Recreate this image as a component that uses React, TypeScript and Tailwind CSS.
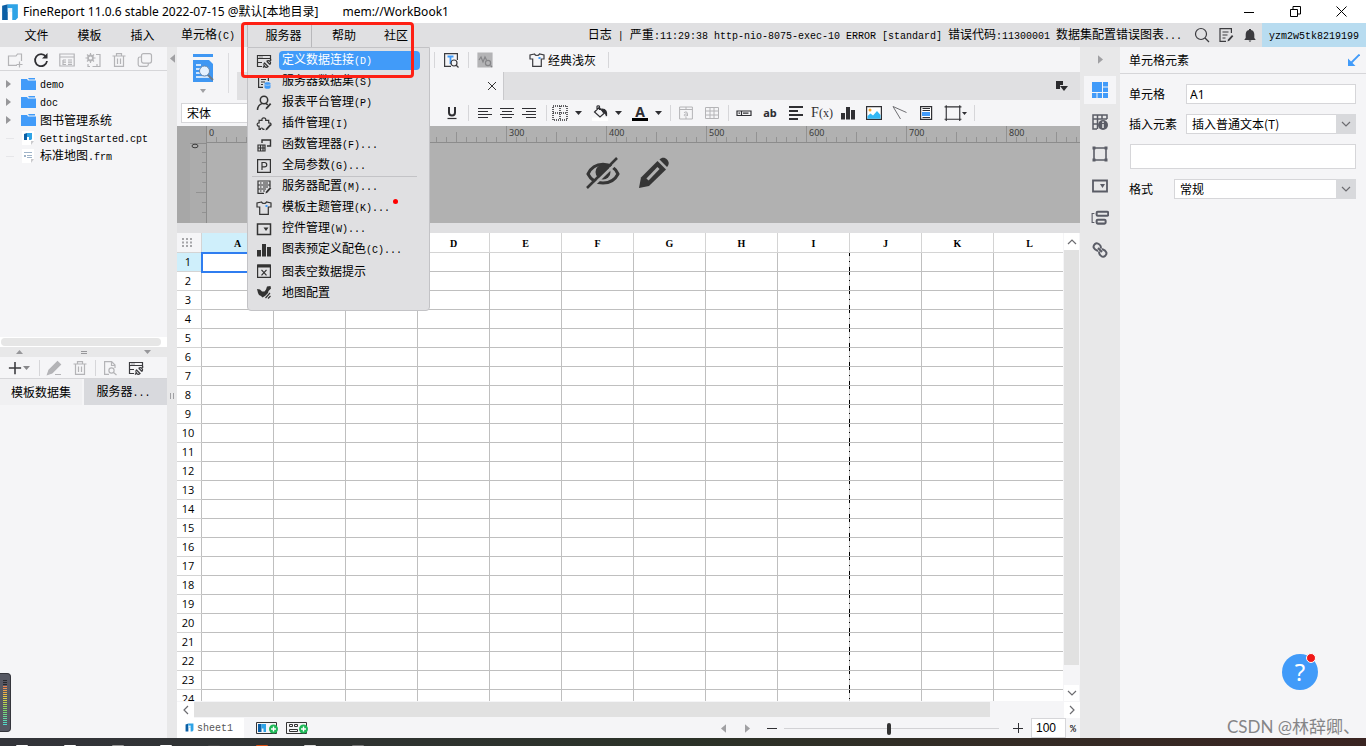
import type { ReactNode } from "react"
import clsx from "clsx"

const cols = ["A", "B", "C", "D", "E", "F", "G", "H", "I", "J", "K", "L"]
const rows = Array.from({ length: 24 }, (_, i) => i + 1)

// CJK runs are 12px wide per glyph, latin runs are half of that
const Mix = ({ text, className }: { text: string; className?: string }) => (
    <span className={clsx("leading-[18px] whitespace-pre", className)}>
        {text.split(/([\u0020-\u00ff]+)/).map((part, i) =>
            i % 2 ? <span key={i} className="font-['Liberation_Mono',monospace] text-[10px]">{part}</span> : part
        )}
    </span>
)

type SvgProps = { children: ReactNode; size?: number; className?: string }

const Svg = ({ children, size = 16, className }: SvgProps) => (
    <svg width={size} height={size} viewBox="0 0 16 16" fill="none" stroke="currentColor" strokeWidth="1.2" className={clsx("shrink-0", className)} aria-hidden="true">
        {children}
    </svg>
)

const Pen = () => <path d="M9.5 14.5l.5-2 4-4.500 1.300 1.200-4 4.500z" fill="currentColor" stroke="none" />

const ConnectIcon = () => (
    <Svg>
        <path d="M6 13.500H1.500v-11h13V7M1.500 5.500h13M3.500 4h1M5.500 4h1M1.500 9.500H6" />
        <path d="M7 14.500l2-2M8.500 10l3.500 3.500c-1 1-2.400 1-3.200.2s-1.300-2.700-.3-3.700zM11 8.500l3 3M10.500 8.500c1-1 2.500-1 3.300-.2s.9 2.200 0 3.200M13.800 8.200l1.500-1.500" />
    </Svg>
)
const DatasetIcon = () => (
    <Svg>
        <path d="M7 13.400H2.600V2.600h9.800V7M5 5.500h5M5 8h4M5 10.500h2" />
        <path d="M8.500 9.500c0-1.800 6-1.800 6 0v4c0 1.800-6 1.800-6 0z" fill="#419bf9" stroke="none" />
        <path d="M8.500 10.500c1 1 5 1 6 0" stroke="#e0e0e2" strokeWidth=".7" />
    </Svg>
)
const UserIcon = () => (
    <Svg>
        <circle cx="8" cy="5" r="3.700" strokeWidth="1.500" />
        <path d="M1.500 15c.2-3.500 2-5.600 4.500-6.400M10 8.600l1.800 1.200" strokeWidth="1.500" />
        <Pen />
    </Svg>
)
const PluginIcon = () => (
    <Svg>
        <path d="M8.500 13.400H7c.2-1.900-2.800-1.900-2.600 0H3.100V10.200C.5 10.300.5 6.800 3.100 6.900V4.400H6c-.8-3.500 4.500-3.500 3.700 0h3v2.400c2.600-.2 2.800 1.800 1.700 2.800" />
        <Pen />
    </Svg>
)
const FunctionIcon = () => (
    <Svg>
        <path d="M6 6V3h8.500v6H11" strokeWidth="1.400" />
        <path d="M2 8h7v6H2zM2 11h7M4.500 8v6M7 8v6" />
    </Svg>
)
const ParamIcon = () => (
    <Svg>
        <path d="M1.600 1.600h12.800v12.800H1.600z" />
        <path d="M6 12V4.500h2.500c3 0 3 4.300 0 4.300H6" />
    </Svg>
)
const ServerIcon = () => (
    <Svg>
        <path d="M8 14.400H2V2h12v6M2 6h12M2 10h8M4 4h1.500M7 4h5M4 8h1.500M7 8h5M4 12h1.500M7 12h2" />
        <Pen />
    </Svg>
)
const ShirtIcon = () => (
    <Svg>
        <path d="M5.500 2L1 3v4h2.700v7.400h8.600V7H15V3l-4.500-1c-.8 2-4.200 2-5 0z" />
        <path d="M9.500 5h2v2h-2z" fill="#419bf9" stroke="none" />
    </Svg>
)
const WidgetIcon = () => (
    <Svg>
        <path d="M1.500 3h13v10.500h-13z" strokeWidth="1.500" />
        <path d="M7.500 6.500h5L10 10z" fill="currentColor" stroke="none" />
    </Svg>
)
const BarsIcon = () => (
    <Svg>
        <path d="M1 8h4v6.500H1zM6 2h4v12.500H6zM11 5h4v9.500h-4z" fill="currentColor" stroke="none" />
    </Svg>
)
const EmptyChartIcon = () => (
    <Svg>
        <path d="M1.600 2h12.800v12.400H1.600z" />
        <path d="M1.500 1.500h13v3h-13z" fill="currentColor" stroke="none" />
        <path d="M5.500 6.800l5 5.500M10.500 6.800l-5 5.500" />
    </Svg>
)
const MapIcon = () => (
    <Svg>
        <path d="M1 5l3 .5 2 2h2.500l1.500-2 1-3 3.500-.5.500 2.500-2.500 2.500-.5 2-3 3-2.500 1.500-1.500-1.500-2-1L2 9z" fill="currentColor" stroke="none" />
        <path d="M9.500 14l4.500-5M12 14.500l2.500-2.500" />
    </Svg>
)
const FineLogo = ({ size = 16 }: { size?: number }) => (
    <Svg size={size}>
        <path d="M1 2.500L6 1v14H1z" fill="#0b5fa5" stroke="none" />
        <path d="M6 1h9v12l-2 2h-3V8H6z" fill="#2ea3e6" stroke="none" />
        <path d="M6 4.500h4V8H6z" fill="#e6f5ff" stroke="none" />
    </Svg>
)
const FolderIcon = () => (
    <svg width="15" height="14" viewBox="0 0 15 14" className="shrink-0" aria-hidden="true">
        <path d="M0 2h6l1 1.500h8V13H0z" fill="#419bf9" />
        <path d="M7 1h7v1.500H8z" fill="#419bf9" />
    </svg>
)
const TrashIcon = () => (
    <Svg><path d="M1.500 4h13M5.500 4V1.600h5V4M3.500 4v10.400h9V4M6.500 6.500v5.500M9.500 6.500v5.500" /></Svg>
)
const Caret = ({ className }: { className?: string }) => (
    <svg width="7" height="4" viewBox="0 0 7 4" className={clsx("shrink-0", className)} aria-hidden="true"><path d="M0 0h7L3.500 4z" fill="currentColor" /></svg>
)
const SideArrow = ({ left = false }: { left?: boolean }) => (
    <svg width="5" height="9" viewBox="0 0 6 10" className="shrink-0 text-[#a0a0a3]" aria-hidden="true">
        <path d={left ? "M6 0v10L0 5z" : "M0 0v10l6-5z"} fill="currentColor" />
    </svg>
)
const Chevron = ({ d }: { d: string }) => (
    <svg width="10" height="10" viewBox="0 0 10 10" fill="none" stroke="#6c6c70" strokeWidth="1.200" aria-hidden="true"><path d={d} /></svg>
)
const Sep = () => <div className="flex w-1 shrink-0 justify-center"><div className="h-4 w-px bg-[#d6d6d9]" /></div>

const Tool = ({ label, className, children }: { label: string; className?: string; children: ReactNode }) => (
    <button type="button" aria-label={label} className={clsx("flex h-5 shrink-0 items-center justify-center", className)}>{children}</button>
)

const TitleBar = () => (
    <header className="flex h-[23px] shrink-0 items-center bg-white pr-0.5 pl-px font-['Noto_Sans','Noto_Sans_CJK_SC',sans-serif] text-[12px] leading-[18px] text-black">
        <FineLogo size={18} />
        <span className="ml-1 whitespace-pre">FineReport 11.0.6 stable 2022-07-15 @默认[本地目录]</span>
        <span className="ml-6 flex-1">mem://WorkBook1</span>
        <Tool label="最小化" className="w-[46px]"><svg width="10" height="10"><path d="M0 5.500h10" stroke="#000" /></svg></Tool>
        <Tool label="还原" className="w-[46px]"><svg width="11" height="11" fill="none" stroke="#000"><path d="M.5 3.500h7v7h-7zM3 3V.5h7.500V8H8" /></svg></Tool>
        <Tool label="关闭" className="w-[46px]"><svg width="11" height="11" stroke="#000"><path d="M.5.5l10 10M10.500.5l-10 10" /></svg></Tool>
    </header>
)

const menuGroups = [
    [
        { text: "定义数据连接(D)", icon: <ConnectIcon />, active: true },
        { text: "服务器数据集(S)", icon: <DatasetIcon /> },
        { text: "报表平台管理(P)", icon: <UserIcon /> },
        { text: "插件管理(I)", icon: <PluginIcon /> },
        { text: "函数管理器(F)...", icon: <FunctionIcon /> },
        { text: "全局参数(G)...", icon: <ParamIcon /> }
    ],
    [
        { text: "服务器配置(M)...", icon: <ServerIcon /> },
        { text: "模板主题管理(K)...", icon: <ShirtIcon />, dot: true },
        { text: "控件管理(W)...", icon: <WidgetIcon /> },
        { text: "图表预定义配色(C)...", icon: <BarsIcon /> },
        { text: "图表空数据提示", icon: <EmptyChartIcon /> },
        { text: "地图配置", icon: <MapIcon /> }
    ]
] as { text: string; icon: ReactNode; active?: boolean; dot?: boolean }[][]

const ServerMenu = () => (
    <div className="absolute top-full -left-px z-20 w-[183px] rounded-b border border-[#c3c3c6] bg-[#e0e0e2] pt-0.5 pb-2 text-[#333]">
        {menuGroups.map((group, i) => (
            <ul key={i} className={clsx(i > 0 && "relative before:absolute before:top-0 before:right-3 before:left-1 before:h-px before:bg-[#c3c3c6]")}>
                {group.map((item) => (
                    <li key={item.text}>
                        <button type="button" className="flex h-[21px] w-full items-center pl-2 text-left">
                            {item.icon}
                            <span className={clsx("relative ml-[7px] flex h-[19px] items-center rounded pl-[3px]", item.active ? "w-[141px] bg-[#419bf9] text-white" : "text-black")}>
                                <Mix text={item.text} />
                                {item.dot && <i className="absolute top-px -right-2 size-[5px] rounded-full bg-[#f00]" />}
                            </span>
                        </button>
                    </li>
                ))}
            </ul>
        ))}
    </div>
)

const MenuBar = () => (
    <nav className="flex h-6 shrink-0 items-stretch bg-[#e0e0e2] pl-2.5 text-black">
        <button type="button" className="w-[53px] shrink-0">文件</button>
        <button type="button" className="w-[53px] shrink-0">模板</button>
        <button type="button" className="w-[53px] shrink-0">插入</button>
        <button type="button" className="w-[78px] shrink-0"><Mix text="单元格(C)" /></button>
        <div className="relative w-[65px] shrink-0 border-x border-[#b8b8bb]">
            <button type="button" className="h-full w-full pl-2">服务器</button>
            <ServerMenu />
            <div className="pointer-events-none absolute -top-px -left-[7px] z-30 h-14 w-[173px] rounded border-[3px] border-[#fe2014]" />
        </div>
        <button type="button" className="w-16 shrink-0">帮助</button>
        <button type="button" className="w-10 shrink-0">社区</button>
        <div className="flex min-w-0 flex-1 items-center justify-end">
            <Mix text="日志 | 严重:11:29:38 http-nio-8075-exec-10 ERROR [standard] 错误代码:11300001 数据集配置错误图表..." />
            <div className="ml-2 flex items-center text-[#3b3b3f]">
                <Tool label="搜索" className="w-6"><Svg><circle cx="7" cy="7" r="5.500" /><path d="M11 11l4 4" /></Svg></Tool>
                <Tool label="反馈" className="w-6"><Svg><path d="M8 14.400H2V1.600h11.400V6M4.500 5h6M4.500 8h5M4.500 11h3" /><Pen /></Svg></Tool>
                <Tool label="通知" className="w-6"><Svg><path d="M7 2h2v1c2.300.5 3.300 2.300 3.300 4.500V11l1.200 1.500v.5h-11v-.5L3.700 11V7.500C3.700 5.300 4.700 3.500 7 3zM6.500 13.500h3L8 15z" fill="currentColor" stroke="none" /></Svg></Tool>
            </div>
        </div>
        <button type="button" className="w-[104px] shrink-0 bg-[#b8dcf0]"><Mix text="yzm2w5tk8219199" /></button>
    </nav>
)

const files = [
    { name: "demo", folder: true },
    { name: "doc", folder: true },
    { name: "图书管理系统", folder: true },
    { name: "GettingStarted.cpt", folder: false },
    { name: "标准地图.frm", folder: false }
]

const LeftPanel = () => (
    <aside className="relative flex w-[167px] shrink-0 flex-col">
        <div className="flex h-6 shrink-0 items-center border-b border-[#d6d6d9] pt-0.5 pl-0.5 text-[#b4b4b7]">
            <Tool label="新建文件夹" className="w-[26px]"><Svg><path d="M10 13.400H1.500V4H9l1.500-2h4v7M12.500 9.500v6M9.500 12.500h6" /></Svg></Tool>
            <Tool label="刷新" className="w-[26px] text-[#2f2f33]"><Svg><path d="M12.800 4.500A6 6 0 1 0 14 9" strokeWidth="1.800" /><path d="M14.500 1v5.500H9z" fill="currentColor" stroke="none" /></Svg></Tool>
            <Tool label="重命名" className="w-[26px]"><Svg><path d="M.8 2h14.400v12H.8zM.8 5h14.400M4 8v4.500h3M4 8h3M4 10.200h3M9 8h4M9 10.200h4M9 12.400h4" /></Svg></Tool>
            <Tool label="设置" className="w-[26px]"><Svg><circle cx="5.500" cy="6" r="2.500" strokeWidth="1.800" /><path d="M5.500 1v2M5.500 9v2M.5 6h2M8.500 6h2M2 2.500L3.500 4M7.500 8L9 9.500M9 2.500L7.500 4M3.500 8L2 9.500M11 2.500h4v12H7.500M3 12v2.500h2M12 12v2.500" /></Svg></Tool>
            <Tool label="删除" className="w-[26px]"><TrashIcon /></Tool>
            <Tool label="复制" className="w-[26px]"><Svg><rect x="4.500" y="1.600" width="10" height="9.500" rx="2" /><path d="M4.500 5H3a1.800 1.800 0 0 0-1.800 1.800v5.800A1.800 1.800 0 0 0 3 14.400h6.500a1.800 1.800 0 0 0 1.800-1.800v-1.500" /></Svg></Tool>
        </div>
        <ul className="h-[266px] shrink-0 pt-1 text-black">
            {files.map((file) => (
                <li key={file.name} className="flex h-[18px] items-center pl-1.5">
                    <span className="flex w-[15px] items-center">
                        {file.folder ? <svg width="5" height="8" aria-hidden="true"><path d="M0 0v8l5-4z" fill="#97979a" /></svg> : <i className="h-px w-2 bg-[#e6e6e9]" />}
                    </span>
                    {file.folder ? <FolderIcon /> : (
                        <svg width="15" height="14" viewBox="0 0 15 14" className="shrink-0" aria-hidden="true">
                            <path d="M1 0h12v10l-3 4H1z" fill="#fff" />
                            <path d="M13 10h-3v4z" fill="#c9c9cc" />
                            {file.name.endsWith("cpt")
                                ? <><path d="M3 3l3-1v7H3z" fill="#0b5fa5" /><path d="M6 2h5v6l-1 1H8V6H6z" fill="#2ea3e6" /></>
                                : <path d="M3 3h8v1H3zM3 6h2v2H3zM6 6h5v1H6zM6 8h5v1H6z" fill="#9fb3c8" />}
                        </svg>
                    )}
                    <Mix text={file.name} className="ml-1" />
                </li>
            ))}
        </ul>
        <div className="h-2.5 shrink-0 bg-white py-px pr-1.5 pl-px"><div className="h-2 rounded bg-[#e6e6e6]" /></div>
        <div className="flex h-2.5 shrink-0 items-center justify-between bg-[#e8e8e9] px-4 text-[#97979a]">
            <Caret className="rotate-180" />
            <i className="h-[3px] w-1.5 border-y border-current" />
            <Caret />
        </div>
        <div className="flex h-[22px] shrink-0 items-center border-b border-[#d6d6d9] pl-[7px] text-[#b4b4b7]">
            <Tool label="新增" className="w-6 gap-px text-[#3b3b3f]"><Svg size={14}><path d="M8 1v14M1 8h14" strokeWidth="1.800" /></Svg><Caret className="text-[#88888b]" /></Tool>
            <span className="ml-1.5"><Sep /></span>
            <Tool label="编辑" className="w-[26px]"><Svg><path d="M1.500 14.500L3 10l8.500-8.500 3 3L6 13zM9 14.500h6" fill="currentColor" /></Svg></Tool>
            <Tool label="移除" className="w-[26px]"><TrashIcon /></Tool>
            <Sep />
            <Tool label="预览数据" className="w-[26px]"><Svg><path d="M7 14.400H2.600V1.600h7l3.400 3.500V8M9.500 2v3.500H13" /><circle cx="9.500" cy="10.500" r="2.600" /><path d="M11.500 12.500l3 2.500" /></Svg></Tool>
            <Tool label="连接" className="w-[26px] text-[#3b3b3f]"><ConnectIcon /></Tool>
        </div>
        <div className="flex h-[26px] shrink-0 text-black">
            <button type="button" className="w-[82px] bg-[#f0f0f2]">模板数据集</button>
            <button type="button" className="ml-0.5 flex-1 bg-[#d8d9dd] pr-1"><Mix text="服务器..." /></button>
        </div>
        <div className="absolute bottom-1.5 left-0 flex h-[59px] w-[11px] flex-col items-center justify-between rounded-r border border-l-0 border-[#34353c] bg-[#565863] pt-1.5 pb-1.5">
            <div className="h-1.5 w-1 bg-[repeating-linear-gradient(#26272c_0_1px,transparent_1px_2px)]" />
            <div className="w-1 flex-1 bg-[repeating-linear-gradient(transparent_0_1px,#565863_1px_2px),linear-gradient(#f08050,#e8d040_30%,#80d860_60%,#50d8d0)]" />
        </div>
    </aside>
)

const PreviewHeader = () => (
    <div className="flex h-[53px] shrink-0">
        <div className="flex w-[60px] shrink-0 bg-[#f5f5f7] pt-1.5">
            <button type="button" aria-label="预览" className="flex w-[51px] flex-col items-center text-[#a0a0a3]">
                <svg width="22" height="30" viewBox="0 0 22 30" fill="none" aria-hidden="true">
                    <path d="M1 1h20v3H1zM1 7h16l4 4v18H1z" fill="#3f97f3" />
                    <path d="M4 12h5M4 16h5M4 20h4M4 24h13" stroke="#fff" strokeWidth="1.500" />
                    <circle cx="12.500" cy="18" r="5" fill="#e4f1ff" stroke="#6b87a8" />
                    <path d="M16 22l5 5" stroke="#6b7b8c" strokeWidth="2" />
                </svg>
                <svg width="6" height="4" className="mt-1.5" aria-hidden="true"><path d="M0 0h6L3 4z" fill="currentColor" /></svg>
            </button>
            <i className="h-10 w-px bg-[#dcdcdf]" />
        </div>
        <div className="flex min-w-0 flex-1 flex-col">
            <div className="flex h-[25px] shrink-0 items-center bg-[#f5f5f7] pl-[195px]">
                <Sep />
                <Tool label="模板预览" className="w-[30px] text-[#3b3b3f]"><Svg><path d="M8 14.400H1.600V1.600h12.800V8" /><path d="M4.500 4.500h6M7.500 4.500V12" stroke="#419bf9" strokeWidth="1.800" /><circle cx="11" cy="11" r="3" /><path d="M13 13l2.500 2.500" /></Svg></Tool>
                <Sep />
                <Tool label="性能检测" className="w-[30px]"><Svg><path d="M1 1h14v14H1z" fill="#b4b4b6" stroke="#b4b4b6" /><path d="M2 8l2-3 2 5 2-5 1.500 3M13.500 13.500l1.500 1.500" stroke="#858588" /><circle cx="11" cy="11" r="2.600" stroke="#858588" /></Svg></Tool>
                <button type="button" className="mr-2.5 ml-[29px] flex items-center gap-[3px] text-[#3b3b3f]"><ShirtIcon /><span className="text-black">经典浅灰</span></button>
                <Sep />
            </div>
            <div className="flex flex-1 items-center bg-[#e0e0e2]">
                <div className="ml-2.5 flex h-full w-[257px] items-center justify-end border-r border-[#c9c9cc] bg-[#f5f5f7] pr-[7px]">
                    <button type="button" aria-label="关闭模板"><svg width="8" height="8" stroke="#333"><path d="M0 0l8 8M8 0L0 8" /></svg></button>
                </div>
                <Tool label="模板列表" className="mr-2.5 ml-auto w-4"><svg width="12" height="10" aria-hidden="true"><path d="M0 0h7v4H4v4H0zM4 5h8l-4 5z" fill="#2b2b2e" /></svg></Tool>
            </div>
        </div>
    </div>
)

const FontBar = () => (
    <div className="flex h-[26px] shrink-0 items-center bg-[#f5f5f7] pl-1 text-[#2f2f33]">
        <select aria-label="字体" className="h-5 w-[240px] shrink-0 appearance-none border border-[#d6d6d9] bg-white pl-[5px] text-[12px] text-black"><option>宋体</option></select>
        <Tool label="下划线" className="mr-[3px] ml-5 w-[22px]"><Svg><path d="M5 2v5.500c0 4 6 4 6 0V2" strokeWidth="2" /><path d="M3.500 13.500h9" /></Svg></Tool>
        <Sep />
        <div className="flex px-1">
            <Tool label="左对齐" className="w-[22px]"><Svg><path d="M1 3.500h14M1 6.500h10M1 9.500h14M1 12.500h10" /></Svg></Tool>
            <Tool label="居中" className="w-[22px]"><Svg><path d="M1 3.500h14M3 6.500h10M1 9.500h14M3 12.500h10" /></Svg></Tool>
            <Tool label="右对齐" className="w-[22px]"><Svg><path d="M1 3.500h14M5 6.500h10M1 9.500h14M5 12.500h10" /></Svg></Tool>
        </div>
        <Sep />
        <Tool label="边框" className="w-10"><span className="flex w-6 justify-center"><Svg><path d="M1 1h14v14H1zM8 1v14M1 8h14" strokeDasharray="1 1" strokeWidth="1.500" /></Svg></span><Caret className="mr-1.5 ml-[3px]" /></Tool>
        <Tool label="背景色" className="w-10"><span className="flex w-6 justify-center"><Svg><path d="M0 12.500h16V16H0z" fill="#fff" stroke="none" /><path d="M7 2.500L12.500 8 8 12 2.500 7zM5 5V1.500c0-1 2.500-1 2.500 0V5" /><path d="M10 4c4 0 5 3 4.500 7-1-3-2-4-3.500-4z" fill="currentColor" /></Svg></span><Caret className="mr-1.5 ml-[3px]" /></Tool>
        <Tool label="字体颜色" className="w-10"><span className="flex w-6 flex-col items-center"><b className="font-['Noto_Sans',sans-serif] text-[14px] leading-[13px]">A</b><i className="h-[3px] w-4 bg-black" /></span><Caret className="mr-1.5 ml-[3px]" /></Tool>
        <Sep />
        <div className="flex px-px text-[#b4b4b7]">
            <Tool label="合并单元格" className="w-[26px]"><Svg><path d="M1.600 2h12.800v12H1.600zM1.600 4.500h12.800M8 2v2.500M8 12v2M6 8c.5-1.500 3.500-1.500 3.500.5V11M9.500 9c-4-.5-4 2-2 2 1 0 2-.5 2-1.500" strokeWidth="1" /></Svg></Tool>
            <Tool label="取消合并" className="w-[26px]"><Svg><path d="M1.500 2.500h13v11h-13zM1.500 6h13M1.500 10h13M6 2.500v11M10 2.500v11" strokeWidth="1" /></Svg></Tool>
        </div>
        <Sep />
        <div className="flex px-px">
            <Tool label="单元格元素" className="w-[26px]"><Svg><path d="M1 6h14v4.500H1zM5.500 6v4.500M7 8.200h5.500M2.500 8.200H4" /></Svg></Tool>
            <Tool label="文本" className="w-[26px]"><b className="font-['Noto_Sans',sans-serif] text-[11px] leading-[16px]">ab</b></Tool>
            <Tool label="富文本" className="w-[26px]"><Svg><path d="M1 2h14M1 6h9M1 10h14M1 14h9" strokeWidth="1.800" /></Svg></Tool>
            <Tool label="公式" className="w-[26px]"><span className="font-['Liberation_Serif',serif] text-[14px] leading-[18px]">F<span className="text-[12px]">(x)</span></span></Tool>
            <Tool label="图表" className="w-[26px]"><BarsIcon /></Tool>
            <Tool label="图片" className="w-[26px]"><Svg><path d="M.6 1.600h14.800v12.800H.6z" fill="#fff" /><path d="M1.500 13.800V11l3-2.500 2.500 2 4-4.500 3.500 4v3.800z" fill="#33b8f5" stroke="none" /><circle cx="4" cy="5" r="1.500" fill="#f8a830" stroke="none" /></Svg></Tool>
            <Tool label="斜线" className="w-[26px]"><Svg className="text-[#6f6f73]"><path d="M1 1.500l13.500 6M1 1.500l7.500 12.500" strokeWidth="1" /></Svg></Tool>
            <Tool label="子报表" className="w-[26px]"><Svg><path d="M2.600 1.600h11v12.800h-11z" fill="#fff" /><path d="M4.500 3.500h7.500M4.500 5.500h7.500M4.500 12.500h7.500" /><path d="M4 7h8v4H4z" fill="#419bf9" stroke="none" /></Svg></Tool>
            <Tool label="悬浮元素" className="w-[32px]"><Svg size={18}><path d="M2 2.500h12v11H2zM.5 2.500h15M.5 13.500h15M2 1v14M14 1v14" strokeWidth="1" /></Svg><svg width="5" height="3" aria-hidden="true"><path d="M0 0h5L2.500 3z" fill="currentColor" /></svg></Tool>
        </div>
        <Sep />
    </div>
)

const Ruler = () => (
    <svg width="100%" height="17" className="block font-['Noto_Sans',sans-serif] text-[9px]" aria-hidden="true">
        {Array.from({ length: 200 }, (_, i) => (
            <path key={i} d={`M${i * 10 - 0.5} ${i % 10 === 0 ? 0 : i % 5 === 0 ? 6 : 11}V16`} stroke="#929292" />
        ))}
        {Array.from({ length: 20 }, (_, i) => <text key={i} x={i * 100 + 2} y="10" fill="#3c3c3c">{i * 100}</text>)}
        <path d="M0 16.500h2000" stroke="#8c8c8c" />
    </svg>
)

const ParamPane = () => (
    <div className="grid h-[97px] shrink-0 grid-cols-[30px_1fr] grid-rows-[17px_1fr] overflow-hidden bg-[#b1b1b1]">
        <div className="border-r border-[#8c8c8c] bg-[#a7a7a7]" />
        <div className="overflow-hidden"><Ruler /></div>
        <div className="bg-[#a7a7a7] pl-[13px]">
            <svg width="17" height="80" className="block bg-[#acacac]" aria-hidden="true">
                <path d="M0 .5h17M16.500 0v80" stroke="#8c8c8c" />
                {[1, 2, 3, 4, 5, 6, 7].map((n) => <path key={n} d={`M${n === 5 ? 6 : 12} ${n * 10 - 0.5}H16`} stroke="#929292" />)}
                <ellipse cx="5" cy="3" rx="3" ry="1.800" fill="none" stroke="#3c3c3c" />
            </svg>
        </div>
        <div className="flex items-start justify-center gap-[18px] pt-[14px] pr-8 text-[#363636]">
            <button type="button" aria-label="隐藏">
                <svg width="34" height="32" viewBox="0 0 34 32" fill="none" stroke="currentColor" aria-hidden="true">
                    <path d="M2 17c6-13 24-13 30 0-6 12-24 12-30 0z" strokeWidth="3" />
                    <circle cx="17" cy="15" r="7.500" fill="currentColor" stroke="none" />
                    <path d="M3.500 32L33 3.500" stroke="#b1b1b1" strokeWidth="3" />
                    <path d="M1 31L31 1" strokeWidth="2.500" />
                </svg>
            </button>
            <button type="button" aria-label="编辑参数面板">
                <svg width="32" height="32" viewBox="0 0 32 32" aria-hidden="true">
                    <path d="M1 31l2-10.500L19.500 4l8.500 8.500L11 29z" fill="currentColor" />
                    <path d="M9.500 22.500L20.500 11" stroke="#b1b1b1" strokeWidth="3" />
                    <path d="M21.500 2.500c2.500-2.500 5.500-2 7.500 0s2.500 5 0 7.500z" fill="currentColor" />
                </svg>
            </button>
        </div>
    </div>
)

// dash-dot page break drawn on the right edge of the last column of a page
const pageBreak = "border-b border-[#bfbfbf] bg-[linear-gradient(#000_0_3px,#c8c8c8_3px_8px,#000_8px_9px,#c8c8c8_9px_14px,#000_14px)] bg-[length:1px_100%] bg-right bg-no-repeat"

const Sheet = () => (
    <div className="flex min-h-0 flex-1 bg-white">
        <div className="min-w-0 flex-1 overflow-hidden">
            <table className="w-max table-fixed border-separate border-spacing-0 text-center text-black">
                <colgroup>
                    <col className="w-[25px]" />
                    {cols.map((c) => <col key={c} className="w-[72px]" />)}
                </colgroup>
                <thead>
                    <tr className="h-5">
                        <th className="border-r border-b border-[#d4d4d4] bg-[#f5f5f7] p-0">
                            <svg width="11" height="9" className="ml-[5px] block" aria-hidden="true">
                                {[0, 4, 8].map((x) => <path key={x} d={`M${x} 0h2v2h-2zM${x} 3.500h2v2h-2zM${x} 7h2v2h-2z`} fill="#a6a6a9" />)}
                            </svg>
                        </th>
                        {cols.map((c) => (
                            <th key={c} className={clsx("border-r border-b border-[#d4d4d4] p-0 pt-0.5 font-['Liberation_Serif',serif] text-[10px] leading-[15px] font-bold", c === "A" && "bg-[#cfeffb]")}>{c}</th>
                        ))}
                    </tr>
                </thead>
                <tbody className="font-['Open_Sans',sans-serif] text-[11px] leading-[15px]">
                    {rows.map((r) => (
                        <tr key={r} className="h-[19px]">
                            <th className={clsx("border-r border-b border-r-[#bfbfbf] border-b-[#d4d4d4] p-0 pr-0.5 pb-px font-normal", r === 1 && "bg-[#cfeffb]")}>{r}</th>
                            {cols.map((c) => (
                                <td
                                    key={c}
                                    className={clsx(
                                        "p-0",
                                        c === "I" ? pageBreak : "border-r border-b border-[#bfbfbf]",
                                        r === 1 && c === "A" && "outline-2 -outline-offset-1 outline-[#2f7df0]"
                                    )}
                                />
                            ))}
                        </tr>
                    ))}
                </tbody>
            </table>
        </div>
        <div className="flex w-[17px] shrink-0 flex-col bg-[#f5f5f7] px-px">
            <button type="button" aria-label="向上" className="flex h-[17px] items-center justify-center bg-white"><Chevron d="M1 7l4-4 4 4" /></button>
            <div className="flex-1 pb-5"><div className="h-full bg-[#e1e1e1]" /></div>
            <button type="button" aria-label="向下" className="flex h-4 items-center justify-center bg-white"><Chevron d="M1 3l4 4 4-4" /></button>
        </div>
    </div>
)

const AddSheet = ({ form = false }: { form?: boolean }) => (
    <svg width="24" height="14" viewBox="0 0 24 14" fill="none" aria-hidden="true">
        <path d="M.5 1.500h20v11H.5z" fill="#f5f5f7" stroke="#333" />
        {form ? <path d="M3.500 3.500h3v2h-3zM8.500 3.500h3v2h-3zM3.500 8.500h8v2h-8z" stroke="#333" /> : <><path d="M2 3h3.500v8H2z" fill="#0b5fa5" /><path d="M5.500 3H10v8H7.500V7.500h-2z" fill="#2ea3e6" /></>}
        <circle cx="17.500" cy="8" r="4.500" fill="#1fb857" />
        <path d="M17.500 5.500v5M15 8h5" stroke="#fff" strokeWidth="1.400" />
    </svg>
)

const BottomBars = () => (
    <>
        <div className="flex h-[17px] shrink-0 bg-[#f5f5f7] pt-px">
            <button type="button" aria-label="向左" className="flex w-[17px] items-center justify-center bg-white"><Chevron d="M7 1L3 5l4 4" /></button>
            <div className="flex-1 pr-[74px]"><div className="h-[15px] bg-[#e1e1e1]" /></div>
            <button type="button" aria-label="向右" className="flex w-4 items-center justify-center bg-white"><Chevron d="M3 1l4 4-4 4" /></button>
        </div>
        <div className="flex h-5 shrink-0 items-center bg-[#f5f5f7]">
            <button type="button" className="flex h-full w-[67px] items-center gap-[3px] bg-white pb-0.5 pl-2 text-[#555]"><FineLogo size={9} /><Mix text="sheet1" /></button>
            <div className="ml-3 flex gap-1.5">
                <Tool label="新建sheet"><AddSheet /></Tool>
                <Tool label="新建表单"><AddSheet form /></Tool>
            </div>
            <div className="ml-auto flex h-full items-center text-[#2f2f33]">
                <Tool label="上一页" className="w-6"><SideArrow left /></Tool>
                <Tool label="下一页" className="w-6"><SideArrow /></Tool>
                <Tool label="缩小" className="w-6"><svg width="10" height="10"><path d="M0 5.500h10" stroke="currentColor" /></svg></Tool>
                <input
                    type="range"
                    aria-label="缩放"
                    defaultValue={49}
                    className="h-4 w-[215px] appearance-none bg-transparent [&::-webkit-slider-runnable-track]:h-px [&::-webkit-slider-runnable-track]:bg-[#d2d2d5] [&::-webkit-slider-thumb]:-mt-[5px] [&::-webkit-slider-thumb]:h-3 [&::-webkit-slider-thumb]:w-1 [&::-webkit-slider-thumb]:appearance-none [&::-webkit-slider-thumb]:rounded-sm [&::-webkit-slider-thumb]:bg-[#333]"
                />
                <Tool label="放大" className="ml-1.5 w-[26px]"><svg width="10" height="10"><path d="M0 5.500h10M5.500 0v10" stroke="currentColor" /></svg></Tool>
                <input aria-label="缩放比例" defaultValue="100" className="h-5 w-[35px] border border-[#d6d6d9] bg-white pl-1 font-['Liberation_Sans',sans-serif] text-[12px] text-black" />
                <Mix text="%" className="mr-1 ml-1 text-black" />
            </div>
        </div>
    </>
)

const SideStrip = () => (
    <div className="flex w-10 shrink-0 flex-col items-center bg-[#e8e8e9] text-[#5a5c66]">
        <div className="flex h-[29px] items-center pb-1"><SideArrow /></div>
        {[
            { label: "单元格元素", icon: <Svg><path d="M0 0h10v10H0zM11 0h5v4.500h-5zM11 5.500h5V10h-5zM0 11h4.500v5H0zM5.500 11H10v5H5.500zM11 11h5v5h-5z" fill="#419bf9" stroke="none" /></Svg> },
            { label: "单元格属性", icon: <Svg><path d="M15 5V1H1v14h4M1 5h14M5.500 1v14M1 10h4M10 1v4" strokeWidth="1.500" /><circle cx="11" cy="11" r="5" fill="currentColor" stroke="none" /><path d="M11 7.500v1.500M11 10v4" stroke="#e8e8e9" strokeWidth="1.500" /></Svg> },
            { label: "悬浮元素", icon: <Svg><path d="M2 2h12v12H2z" strokeWidth="1.600" /><path d="M.5.5h3v3h-3zM12.500.5h3v3h-3zM.5 12.500h3v3h-3zM12.500 12.500h3v3h-3z" fill="currentColor" stroke="none" /></Svg> },
            { label: "控件设置", icon: <Svg><path d="M1 2.500h14v11H1z" strokeWidth="1.800" /><path d="M8 6h5l-2.500 4z" fill="currentColor" stroke="none" /></Svg> },
            { label: "条件属性", icon: <Svg size={18}><path d="M3 4H1v8h2" strokeWidth="1" /><rect x="5" y="2.500" width="10.300" height="3.500" rx="1" strokeWidth="1.800" /><rect x="5" y="9.500" width="8" height="3.500" rx="1" strokeWidth="1.800" /></Svg> },
            { label: "超级链接", icon: <Svg><path d="M8.500 6.500C10 4 5.500-.5 3 2S1 7 6 9M7.500 9.500C6 12 10.500 16.500 13 14s2-5-3-7M6 6l4 4" strokeWidth="2" /></Svg> }
        ].map((item, i) => (
            <button key={item.label} type="button" aria-label={item.label} className={clsx("mb-1 flex h-7 w-8 items-center justify-center", i === 0 && "bg-[#f5f5f7]")}>{item.icon}</button>
        ))}
    </div>
)

const field = "w-full border border-[#d6d6d9] bg-white text-[12px] text-black"

const Select = ({ id, value }: { id: string; value: string }) => (
    <div className="relative flex-1">
        <select id={id} className={clsx(field, "block h-5 appearance-none pl-[5px]")}><option>{value}</option></select>
        <span className="pointer-events-none absolute inset-y-0 right-0 flex w-5 items-center justify-center bg-[#d8d9dc]"><Chevron d="M1 3l4 4 4-4" /></span>
    </div>
)

const RightPanel = () => (
    <aside className="flex w-[246px] shrink-0 flex-col text-black">
        <div className="flex h-[27px] items-center justify-between border-b border-[#d6d6d9] pr-1.5 pl-[9px]">
            <h2>单元格元素</h2>
            <svg width="12" height="12" aria-hidden="true"><path d="M11.500.5L3 9" stroke="#419bf9" strokeWidth="1.800" /><path d="M0 4.500V12h7.500z" fill="#419bf9" /></svg>
        </div>
        <form className="flex flex-col gap-2.5 py-2.5 pr-2.5 pl-[9px]">
            <div className="flex items-center"><label htmlFor="cell" className="w-[57px]">单元格</label><div className="flex-1"><input id="cell" defaultValue="A1" className={clsx(field, "block h-5 pl-[3px] font-['Noto_Sans',sans-serif]")} /></div></div>
            <div className="flex items-center"><label htmlFor="insert" className="w-[57px]">插入元素</label><Select id="insert" value="插入普通文本(T)" /></div>
            <div className="pl-px"><input aria-label="文本内容" className={clsx(field, "block h-[25px] px-1")} /></div>
            <div className="flex items-center"><label htmlFor="format" className="w-[45px]">格式</label><Select id="format" value="常规" /></div>
        </form>
        <div className="mt-auto flex flex-col items-end">
            <button type="button" aria-label="帮助" className="relative mr-12 flex size-9 items-center justify-center rounded-full bg-[#419bf9] font-['Noto_Sans',sans-serif] text-[24px] leading-none text-white">
                ?
                <i className="absolute -top-px right-0.5 size-2.5 rounded-full border border-white bg-[#f01818]" />
            </button>
            <p className="mt-[26px] mr-1.5 h-[22px] font-['Lato','Noto_Sans_CJK_SC',sans-serif] text-[17px] leading-[22px] whitespace-nowrap text-[#858587]">CSDN @林辞卿、</p>
        </div>
    </aside>
)

const Taskbar = () => (
    <footer className="flex h-2 shrink-0 items-end gap-9 overflow-hidden bg-linear-to-r from-[#33343a] via-[#2b3228] to-[#3a2422] pl-4">
        {["bg-white", "bg-white", "bg-[#999]", "bg-white", "bg-[#444]", "bg-[#e05010]", "bg-[#ddd]", "bg-[#777]"].map((color, i) => (
            <i key={i} className={clsx("h-px w-3 rounded-t-full", color)} />
        ))}
    </footer>
)

export default function App() {
    return (
        <div className="flex h-screen flex-col overflow-hidden bg-[#f5f5f7] font-['Noto_Sans_CJK_SC',sans-serif] text-[12px] leading-[18px] select-none">
            <TitleBar />
            <MenuBar />
            <div className="flex min-h-0 flex-1">
                <LeftPanel />
                <div className="relative flex w-2.5 shrink-0 flex-col items-center justify-between bg-[#e8e8e9] pt-[7px]">
                    <SideArrow left />
                    <i className="mb-2.5 h-[6px] w-1 border-x border-[#a0a0a3]" />
                    <i />
                </div>
                <main className="flex min-w-0 flex-1 flex-col">
                    <PreviewHeader />
                    <FontBar />
                    <ParamPane />
                    <div className="h-2.5 shrink-0 bg-[#e0e0e2]" />
                    <Sheet />
                    <BottomBars />
                </main>
                <SideStrip />
                <RightPanel />
            </div>
            <Taskbar />
        </div>
    )
}
